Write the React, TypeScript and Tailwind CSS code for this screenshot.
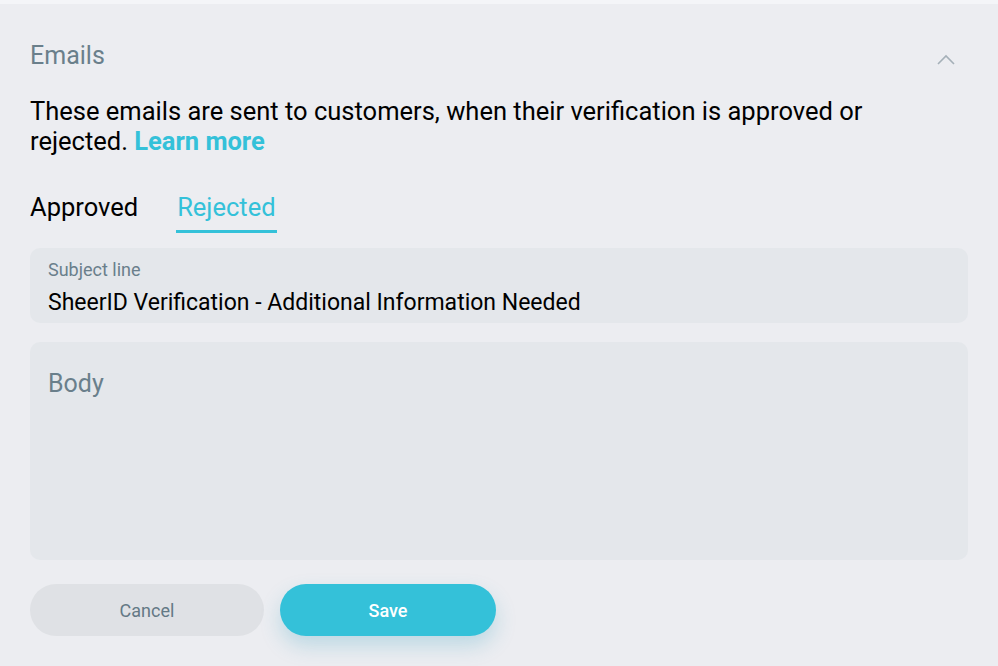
import { useState } from "react";

export default function App() {
  const [tab, setTab] = useState<"approved" | "rejected">("rejected");

  return (
    <div className="min-h-[666px] w-[998px] bg-[#ecedf1] font-['Roboto',sans-serif]">
      <div className="h-[4px] bg-[#f4f5f8]" />
      <div className="px-[30px] pt-[37px]">
        {/* Header */}
        <div className="flex items-center justify-between">
          <h2 className="text-[25px] leading-[30px] text-[#6a7f8b]">Emails</h2>
          <svg width="20" height="12" viewBox="0 0 20 12" className="mr-[12px] mt-[8px]">
            <path d="M2 10 L10 2 L18 10" fill="none" stroke="#a5b0b8" strokeWidth="1.6" />
          </svg>
        </div>

        <p className="mt-[25px] w-[880px] text-[25.5px] leading-[30px] text-black">
          <span>These emails are sent to customers, when their verification is approved or</span>{" "}
          <span>rejected.</span>{" "}
          <a href="#" className="font-bold text-[#34c1d9]">
            Learn more
          </a>
        </p>

        {/* Tabs */}
        <div className="mt-[35px] flex gap-[38px]">
          <button
            type="button"
            onClick={() => setTab("approved")}
            className={`border-b-[3px] pb-[7px] text-[25.5px] leading-[32px] ${
              tab === "approved" ? "border-[#34c1d9] text-[#34c1d9]" : "border-transparent text-black"
            }`}
          >
            Approved
          </button>
          <button
            type="button"
            onClick={() => setTab("rejected")}
            className={`border-b-[3px] px-[1px] pb-[7px] text-[25.5px] leading-[32px] ${
              tab === "rejected" ? "border-[#34c1d9] text-[#34c1d9]" : "border-transparent text-black"
            }`}
          >
            Rejected
          </button>
        </div>

        {/* Subject */}
        <div className="mt-[15px] h-[75px] rounded-[10px] bg-[#e4e7eb] px-[18px] pt-[12px]">
          <div className="text-[18px] leading-[20px] text-[#6a7f8b]">Subject line</div>
          <div className="mt-[9px] text-[23px] leading-[28px] text-black">
            {tab === "rejected"
              ? "SheerID Verification - Additional Information Needed"
              : "SheerID Verification - Approved"}
          </div>
        </div>

        {/* Body */}
        <div className="mt-[19px] h-[218px] rounded-[10px] bg-[#e4e7eb] px-[18px] pt-[27px]">
          <div className="text-[25px] leading-[30px] text-[#6a7f8b]">Body</div>
        </div>

        {/* Actions */}
        <div className="mt-[24px] flex gap-[16px]">
          <button
            type="button"
            className="h-[52px] w-[234px] rounded-full bg-[#dfe1e5] text-[18px] text-[#647985]"
          >
            Cancel
          </button>
          <button
            type="button"
            className="h-[52px] w-[216px] rounded-full bg-[#34c1d9] text-[18px] font-medium text-white shadow-[0_10px_20px_rgba(52,160,190,0.25)]"
          >
            Save
          </button>
        </div>
      </div>
    </div>
  );
}
